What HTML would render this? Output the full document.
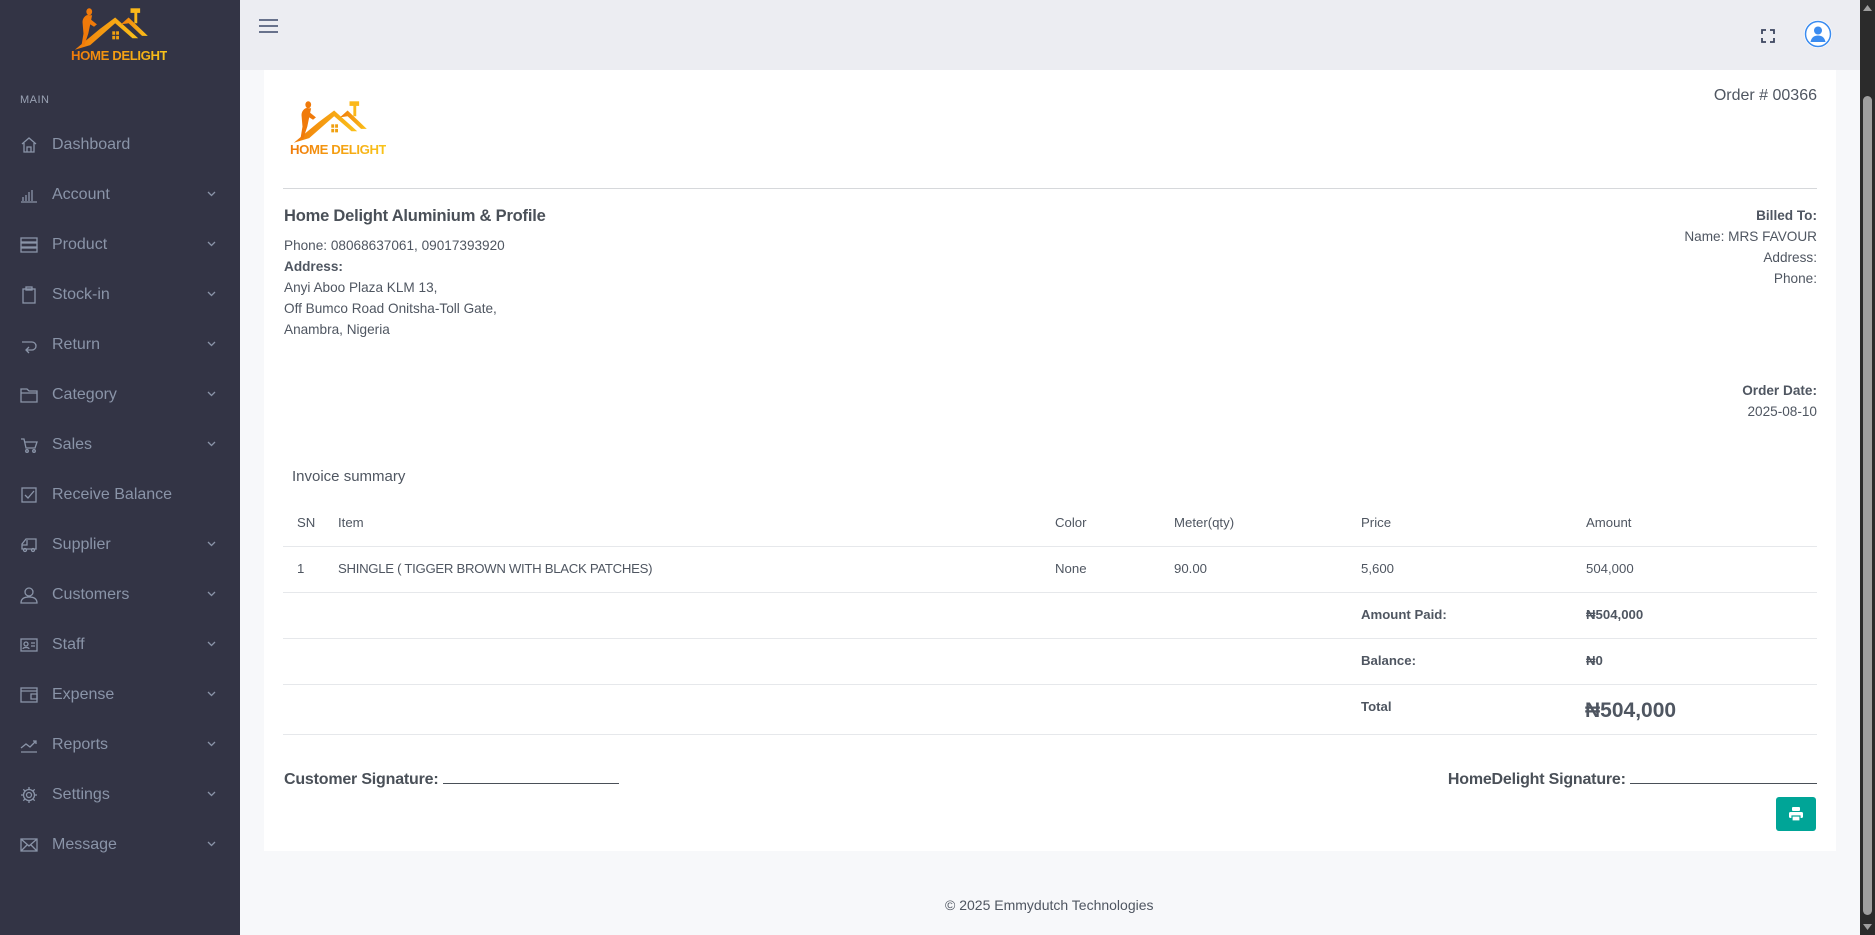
<!DOCTYPE html>
<html><head><meta charset="utf-8"><style>
*{margin:0;padding:0;box-sizing:border-box}
body{width:1875px;height:935px;overflow:hidden;background:#f7f8fa;font-family:"Liberation Sans",sans-serif;color:#4f5661;position:relative}
.sb{position:absolute;left:0;top:0;width:240px;height:935px;background:#333445}
.main-lbl{position:absolute;left:20px;top:94px;font-size:11px;color:#9aa2b4;letter-spacing:.5px}
.mi{position:absolute;left:0;width:240px;height:30px;font-size:16px;color:#8a94a8}
.mi svg.ic{position:absolute;left:20px;top:6px;width:18px;height:18px}
.mi span{position:absolute;left:52px;top:6px}
.mi .ch{position:absolute;left:207px;top:11px;width:9px;height:6px}
.hdr{position:absolute;left:240px;top:0;width:1620px;height:70px;background:#ecedf2}
.card{position:absolute;left:264px;top:70px;width:1572px;height:781px;background:#fff}
.a{position:absolute;white-space:nowrap}
.r{text-align:right}
.t13{font-size:13.2px}
.b{font-weight:bold}
.line{position:absolute;left:283px;width:1534px;height:1px;background:#e6e8eb}
.scr{position:absolute;left:1860px;top:0;width:15px;height:935px;background:#2b2b2b}
.logo-t{font-weight:900;letter-spacing:-.4px;background:linear-gradient(90deg,#f07a0a,#f9c51a);-webkit-background-clip:text;background-clip:text;color:transparent}
.sig{display:inline-block;border-bottom:1.5px solid #4a5058;height:17px;vertical-align:baseline}
</style></head><body>
<div class="sb">
  <svg class="a" style="left:71px;top:6px" width="96" height="46" viewBox="0 0 100 40" preserveAspectRatio="none">
    <defs><linearGradient id="g" x1="0" x2="1"><stop offset="0" stop-color="#f07a0a"/><stop offset="1" stop-color="#fbc21a"/></linearGradient></defs>
    <path d="M4 38 L30 20 L46 10 L70 28 L64 28 L46 15 L20 34 Z" fill="url(#g)"/>
    <path d="M52 16 L60 10 L80 26 L74 26 L60 15 Z" fill="url(#g)"/>
    <path d="M12 14 c0-4 4-7 7-6 l3 0 l-1 4 l6 4 l-3 2 l-4-2 l-2 8 l-4 10 l-3 0 l2-10 z" fill="#f07a0a"/>
    <circle cx="19" cy="5" r="3" fill="#f07a0a"/>
    <rect x="62" y="2" width="10" height="4" fill="#fbb81a"/><rect x="66" y="5" width="3" height="10" fill="#fbb81a"/>
    <rect x="43" y="22" width="3" height="3" fill="#f0a010"/><rect x="47" y="22" width="3" height="3" fill="#f0a010"/><rect x="43" y="26" width="3" height="3" fill="#f0a010"/><rect x="47" y="26" width="3" height="3" fill="#f0a010"/>
  </svg>
  <div class="a logo-t" style="left:71px;top:48px;font-size:13.2px">HOME DELIGHT</div>
  <div class="main-lbl">MAIN</div>
</div>
<div class="hdr">
  <svg class="a" style="left:19px;top:19px" width="19" height="14" viewBox="0 0 19 14"><path d="M0 1h19M0 7h19M0 13h19" stroke="#3d4a6b" stroke-width="1.6"/></svg>
  <svg class="a" style="left:1521px;top:29px" width="14" height="14" viewBox="0 0 14 14" fill="none" stroke="#3d4660" stroke-width="1.8"><path d="M1 5V1h4M9 1h4v4M13 9v4H9M5 13H1V9"/></svg>
  <svg class="a" style="left:1563px;top:19px" width="30" height="30" viewBox="0 0 30 30"><circle cx="15" cy="15" r="14" fill="#fff"/><circle cx="15" cy="15" r="12.5" fill="none" stroke="#3b8cf0" stroke-width="1.5"/><circle cx="15" cy="11.5" r="4" fill="#3b8cf0"/><path d="M7.5 23c1-5 4-6.5 7.5-6.5s6.5 1.5 7.5 6.5z" fill="#3b8cf0"/></svg>
</div>
<div class="card"></div>
<svg class="a" style="left:290px;top:99px" width="96" height="46" viewBox="0 0 100 40" preserveAspectRatio="none">
  <path d="M4 38 L30 20 L46 10 L70 28 L64 28 L46 15 L20 34 Z" fill="url(#g)"/>
  <path d="M52 16 L60 10 L80 26 L74 26 L60 15 Z" fill="url(#g)"/>
  <path d="M12 14 c0-4 4-7 7-6 l3 0 l-1 4 l6 4 l-3 2 l-4-2 l-2 8 l-4 10 l-3 0 l2-10 z" fill="#f07a0a"/>
  <circle cx="19" cy="5" r="3" fill="#f07a0a"/>
  <rect x="62" y="2" width="10" height="4" fill="#fbb81a"/><rect x="66" y="5" width="3" height="10" fill="#fbb81a"/>
  <rect x="43" y="22" width="3" height="3" fill="#f0a010"/><rect x="47" y="22" width="3" height="3" fill="#f0a010"/><rect x="43" y="26" width="3" height="3" fill="#f0a010"/><rect x="47" y="26" width="3" height="3" fill="#f0a010"/>
</svg>
<div class="a logo-t" style="left:290px;top:142px;font-size:13.2px">HOME DELIGHT</div>
<div class="a r" style="right:58px;top:87px;font-size:16px">Order # 00366</div>
<div class="a" style="left:283px;top:188px;width:1534px;height:1px;background:#d6d8db"></div>
<div class="a" style="left:284px;top:207px;font-size:16.5px;font-weight:bold;color:#4a5058;letter-spacing:-.2px">Home Delight Aluminium &amp; Profile</div>
<div class="a" style="left:284px;top:235px;line-height:21px;font-size:13.6px">Phone: 08068637061, 09017393920<br><b>Address:</b><br>Anyi Aboo Plaza KLM 13,<br>Off Bumco Road Onitsha-Toll Gate,<br>Anambra, Nigeria</div>
<div class="a r" style="right:58px;top:205px;line-height:21px;font-size:13.6px"><b>Billed To:</b><br>Name: MRS FAVOUR<br>Address:<br>Phone:</div>
<div class="a r" style="right:58px;top:380px;line-height:21px;font-size:13.6px"><b>Order Date:</b><br>2025-08-10</div>
<div class="a" style="left:292px;top:468px;font-size:15px">Invoice summary</div>
<div class="a t13" style="left:297px;top:515px">SN</div>
<div class="a t13" style="left:338px;top:515px">Item</div>
<div class="a t13" style="left:1055px;top:515px">Color</div>
<div class="a t13" style="left:1174px;top:515px">Meter(qty)</div>
<div class="a t13" style="left:1361px;top:515px">Price</div>
<div class="a t13" style="left:1586px;top:515px">Amount</div>
<div class="line" style="top:546px"></div>
<div class="a t13" style="left:297px;top:561px">1</div>
<div class="a t13" style="left:338px;top:561px;letter-spacing:-.3px">SHINGLE ( TIGGER BROWN WITH BLACK PATCHES)</div>
<div class="a t13" style="left:1055px;top:561px">None</div>
<div class="a t13" style="left:1174px;top:561px">90.00</div>
<div class="a t13" style="left:1361px;top:561px">5,600</div>
<div class="a t13" style="left:1586px;top:561px">504,000</div>
<div class="line" style="top:592px"></div>
<div class="a t13 b" style="left:1361px;top:607px">Amount Paid:</div>
<div class="a t13 b" style="left:1586px;top:607px">₦504,000</div>
<div class="line" style="top:638px"></div>
<div class="a t13 b" style="left:1361px;top:653px">Balance:</div>
<div class="a t13 b" style="left:1586px;top:653px">₦0</div>
<div class="line" style="top:684px"></div>
<div class="a t13 b" style="left:1361px;top:699px">Total</div>
<div class="a b" style="left:1585px;top:699px;font-size:21px">₦504,000</div>
<div class="line" style="top:734px"></div>
<div class="a b" style="left:284px;top:767px;font-size:16px;color:#4a5058;letter-spacing:-.2px">Customer Signature: <span class="sig" style="width:176px"></span></div>
<div class="a r b" style="right:58px;top:767px;font-size:16px;color:#4a5058;letter-spacing:-.2px">HomeDelight Signature: <span class="sig" style="width:187px"></span></div>
<div class="a" style="left:1776px;top:797px;width:40px;height:34px;background:#00a597;border-radius:3px">
  <svg style="position:absolute;left:13px;top:10px" width="14" height="14" viewBox="0 0 14 14" fill="#fff"><rect x="3" y="0" width="8" height="4" rx="1"/><rect x="0" y="5" width="14" height="6" rx="1.5"/><rect x="3" y="9" width="8" height="5" fill="#fff" stroke="#00a597" stroke-width="1.2"/></svg>
</div>
<div class="a" style="left:945px;top:897px;font-size:14px">© 2025 Emmydutch Technologies</div>
<div class="scr">
  <div style="position:absolute;left:3px;top:96px;width:9px;height:819px;background:#9f9f9f;border-radius:5px"></div>
  <svg style="position:absolute;left:3px;top:5px" width="9" height="6"><path d="M0 6L4.5 0 9 6z" fill="#9f9f9f"/></svg>
  <svg style="position:absolute;left:3px;top:924px" width="9" height="6"><path d="M0 0L4.5 6 9 0z" fill="#9f9f9f"/></svg>
</div>
<div style="position:absolute;left:0;top:2px">
<div class="mi" style="top:128px"><svg class="ic" viewBox="0 0 18 18" fill="none" stroke="#8a94a8" stroke-width="1.3"><path d="M2 8L9 2l7 6M4 7v9h10V7M7 16v-5h4v5"/></svg><span>Dashboard</span></div>
<div class="mi" style="top:178px"><svg class="ic" viewBox="0 0 18 18" fill="none" stroke="#8a94a8" stroke-width="1.3"><path d="M1 16h16M3 15v-4M6 15V9M9 15V6M12 15V4"/></svg><span>Account</span><svg class="ch" viewBox="0 0 9 6"><path d="M1 1l3.5 3.5L8 1" fill="none" stroke="#8a94a8" stroke-width="1.3"/></svg></div>
<div class="mi" style="top:228px"><svg class="ic" viewBox="0 0 18 18" fill="none" stroke="#8a94a8" stroke-width="1.3"><rect x="1" y="2" width="16" height="4"/><rect x="1" y="7" width="16" height="4"/><rect x="1" y="12" width="16" height="4"/></svg><span>Product</span><svg class="ch" viewBox="0 0 9 6"><path d="M1 1l3.5 3.5L8 1" fill="none" stroke="#8a94a8" stroke-width="1.3"/></svg></div>
<div class="mi" style="top:278px"><svg class="ic" viewBox="0 0 18 18" fill="none" stroke="#8a94a8" stroke-width="1.3"><rect x="3" y="3" width="12" height="14"/><rect x="6" y="1" width="6" height="3"/></svg><span>Stock-in</span><svg class="ch" viewBox="0 0 9 6"><path d="M1 1l3.5 3.5L8 1" fill="none" stroke="#8a94a8" stroke-width="1.3"/></svg></div>
<div class="mi" style="top:328px"><svg class="ic" viewBox="0 0 18 18" fill="none" stroke="#8a94a8" stroke-width="1.3"><path d="M2 6h10a4 4 0 010 8H7M9 11l-3 3 3 3"/></svg><span>Return</span><svg class="ch" viewBox="0 0 9 6"><path d="M1 1l3.5 3.5L8 1" fill="none" stroke="#8a94a8" stroke-width="1.3"/></svg></div>
<div class="mi" style="top:378px"><svg class="ic" viewBox="0 0 18 18" fill="none" stroke="#8a94a8" stroke-width="1.3"><path d="M1 3h6l2 2h8v11H1z M1 7h16"/></svg><span>Category</span><svg class="ch" viewBox="0 0 9 6"><path d="M1 1l3.5 3.5L8 1" fill="none" stroke="#8a94a8" stroke-width="1.3"/></svg></div>
<div class="mi" style="top:428px"><svg class="ic" viewBox="0 0 18 18" fill="none" stroke="#8a94a8" stroke-width="1.3"><path d="M1 3h3l2 9h9l2-6H5"/><circle cx="7" cy="15" r="1.3"/><circle cx="14" cy="15" r="1.3"/></svg><span>Sales</span><svg class="ch" viewBox="0 0 9 6"><path d="M1 1l3.5 3.5L8 1" fill="none" stroke="#8a94a8" stroke-width="1.3"/></svg></div>
<div class="mi" style="top:478px"><svg class="ic" viewBox="0 0 18 18" fill="none" stroke="#8a94a8" stroke-width="1.3"><rect x="2" y="2" width="14" height="14"/><path d="M5 9l3 3 6-7"/></svg><span>Receive Balance</span></div>
<div class="mi" style="top:528px"><svg class="ic" viewBox="0 0 18 18" fill="none" stroke="#8a94a8" stroke-width="1.3"><path d="M6 3h10v10H2V8l4-5zM2 9h5V4"/><circle cx="5" cy="14" r="1.5"/><circle cx="13" cy="14" r="1.5"/></svg><span>Supplier</span><svg class="ch" viewBox="0 0 9 6"><path d="M1 1l3.5 3.5L8 1" fill="none" stroke="#8a94a8" stroke-width="1.3"/></svg></div>
<div class="mi" style="top:578px"><svg class="ic" viewBox="0 0 18 18" fill="none" stroke="#8a94a8" stroke-width="1.3"><circle cx="9" cy="6" r="4"/><path d="M1 17c0-4 3-6 8-6s8 2 8 6z"/></svg><span>Customers</span><svg class="ch" viewBox="0 0 9 6"><path d="M1 1l3.5 3.5L8 1" fill="none" stroke="#8a94a8" stroke-width="1.3"/></svg></div>
<div class="mi" style="top:628px"><svg class="ic" viewBox="0 0 18 18" fill="none" stroke="#8a94a8" stroke-width="1.3"><rect x="1" y="3" width="16" height="12"/><circle cx="6" cy="8" r="2"/><path d="M3 13c0-2 6-2 6 0M11 7h4M11 10h4"/></svg><span>Staff</span><svg class="ch" viewBox="0 0 9 6"><path d="M1 1l3.5 3.5L8 1" fill="none" stroke="#8a94a8" stroke-width="1.3"/></svg></div>
<div class="mi" style="top:678px"><svg class="ic" viewBox="0 0 18 18" fill="none" stroke="#8a94a8" stroke-width="1.3"><rect x="1" y="2" width="16" height="14"/><path d="M1 5h16M11 8h6v5h-6z"/></svg><span>Expense</span><svg class="ch" viewBox="0 0 9 6"><path d="M1 1l3.5 3.5L8 1" fill="none" stroke="#8a94a8" stroke-width="1.3"/></svg></div>
<div class="mi" style="top:728px"><svg class="ic" viewBox="0 0 18 18" fill="none" stroke="#8a94a8" stroke-width="1.3"><path d="M1 16h16M1 12l5-4 4 3 6-6M13 5h3v3"/></svg><span>Reports</span><svg class="ch" viewBox="0 0 9 6"><path d="M1 1l3.5 3.5L8 1" fill="none" stroke="#8a94a8" stroke-width="1.3"/></svg></div>
<div class="mi" style="top:778px"><svg class="ic" viewBox="0 0 18 18" fill="none" stroke="#8a94a8" stroke-width="1.3"><circle cx="9" cy="9" r="2.5"/><path d="M9 1v3M9 14v3M1 9h3M14 9h3M3.3 3.3l2.1 2.1M12.6 12.6l2.1 2.1M3.3 14.7l2.1-2.1M12.6 5.4l2.1-2.1"/><circle cx="9" cy="9" r="5.5"/></svg><span>Settings</span><svg class="ch" viewBox="0 0 9 6"><path d="M1 1l3.5 3.5L8 1" fill="none" stroke="#8a94a8" stroke-width="1.3"/></svg></div>
<div class="mi" style="top:828px"><svg class="ic" viewBox="0 0 18 18" fill="none" stroke="#8a94a8" stroke-width="1.3"><rect x="1" y="3" width="16" height="12"/><path d="M1 3l8 7 8-7M1 15l6-6M17 15l-6-6"/></svg><span>Message</span><svg class="ch" viewBox="0 0 9 6"><path d="M1 1l3.5 3.5L8 1" fill="none" stroke="#8a94a8" stroke-width="1.3"/></svg></div>
</div>
</body></html>
